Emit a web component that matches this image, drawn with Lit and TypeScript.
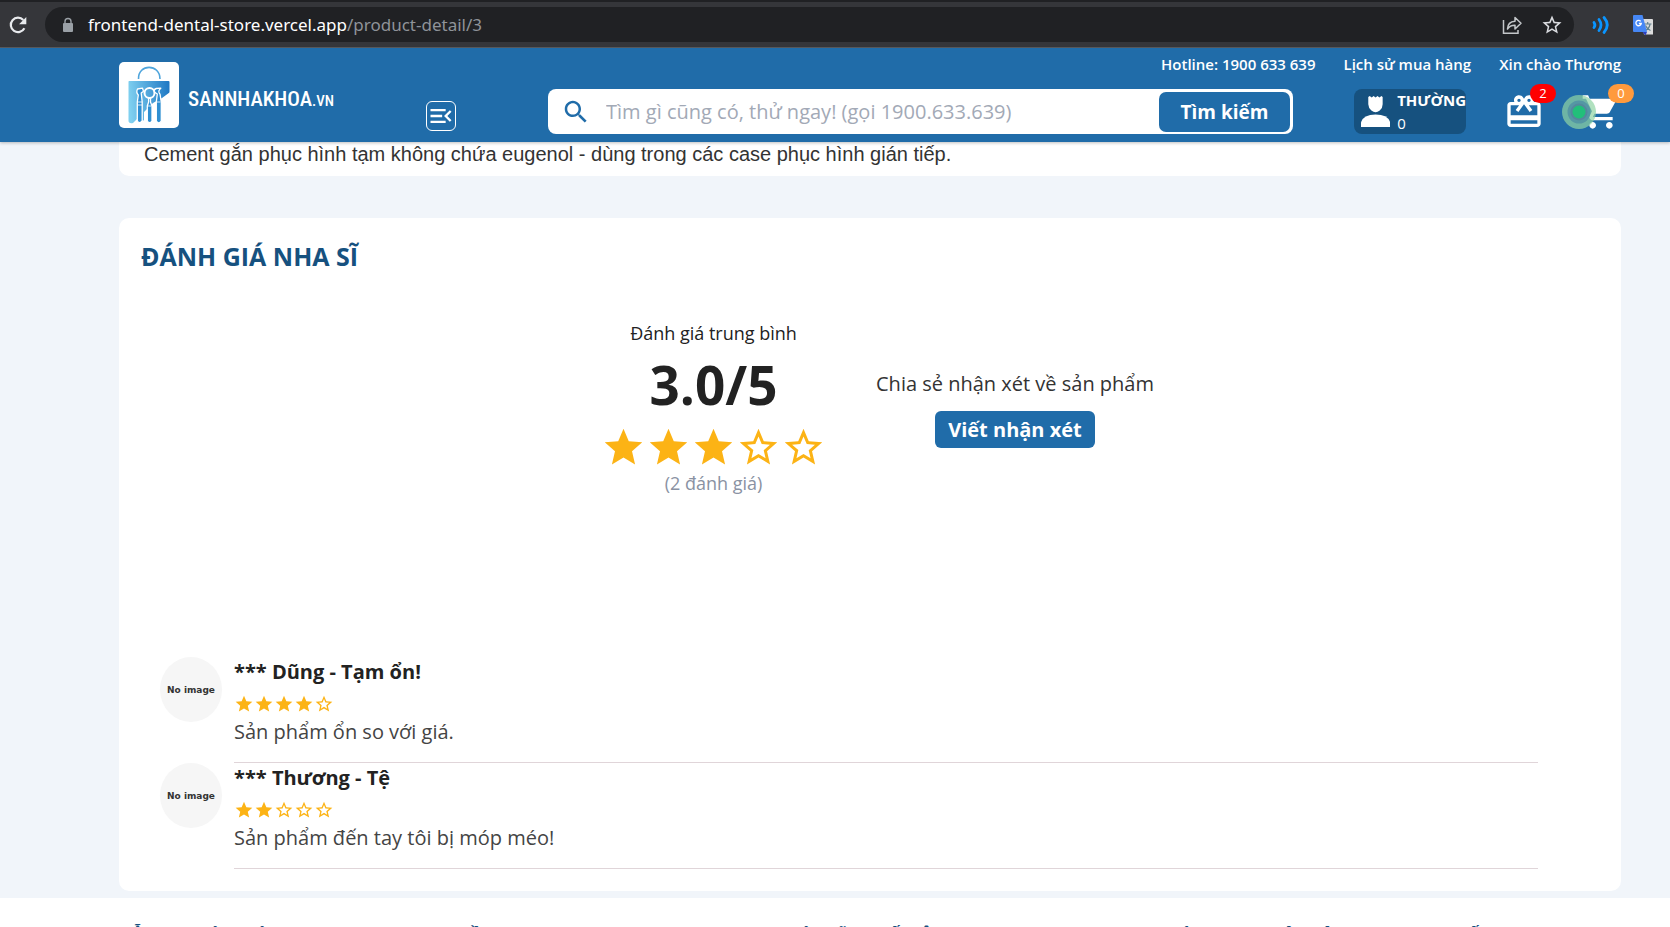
import { LitElement, html, svg, css } from "lit";
import { customElement, property } from "lit/decorators.js";

const STAR_FULL =
  "M12 17.27 18.18 21l-1.64-7.03L22 9.24l-7.19-.61L12 2 9.19 8.63 2 9.24l5.46 4.73L5.82 21z";
const STAR_EMPTY =
  "m22 9.24-7.19-.62L12 2 9.19 8.63 2 9.24l5.46 4.73L5.82 21 12 17.27 18.18 21l-1.63-7.03L22 9.24zM12 15.4l-3.76 2.27 1-4.28-3.32-2.88 4.38-.38L12 6.1l1.71 4.04 4.38.38-3.32 2.88 1 4.28L12 15.4z";

@customElement("star-rating")
export class StarRating extends LitElement {
  @property({ type: Number }) value = 0;
  @property({ type: Boolean, reflect: true }) large = false;

  static styles = css`
    :host { display: flex; color: #fcb315; }
    .star { display: block; width: 20px; height: 20px; fill: currentColor; }
    :host([large]) .star { width: 45px; height: 45px; }
  `;

  render() {
    return [1, 2, 3, 4, 5].map(
      (n) => html`<svg class="star" viewBox="0 0 24 24" aria-hidden="true">
        ${svg`<path d=${n <= this.value ? STAR_FULL : STAR_EMPTY}></path>`}
      </svg>`
    );
  }
}

@customElement("browser-bar")
export class BrowserBar extends LitElement {
  static styles = css`
    :host {
      display: flex; align-items: center; box-sizing: border-box; height: 48px;
      padding: 0 16px 0 8px; background: #35363a;
      border-top: 2px solid #202124; border-bottom: 1px solid #5b5c60;
      font-family: "Noto Sans", "Open Sans", sans-serif;
    }
    button { display: flex; padding: 0; border: 0; background: none; }
    .pill {
      display: flex; align-items: center; flex: 1; height: 35px; box-sizing: border-box;
      margin: 0 17px; padding: 0 12px 0 15px; border-radius: 18px; background: #202124;
    }
    .url { flex: 1; margin-left: 12px; font-size: 17px; line-height: 24px; color: #8f9399; white-space: nowrap; }
    .host { color: #fff; }
    .tools { display: flex; gap: 19px; }
    .extensions { display: flex; gap: 19px; align-items: center; }
    svg { display: block; }
  `;

  render() {
    return html`
      <button aria-label="Tải lại">
        <svg width="20" height="20" viewBox="0 0 20 20" fill="none">
          <path d="M16.4 13.2A7.2 7.2 0 1 1 15.3 5" stroke="#e8eaed" stroke-width="2.2" />
          <path d="M18.3 2v7.2h-7.2z" fill="#e8eaed" />
        </svg>
      </button>
      <div class="pill">
        <svg width="16" height="16" viewBox="0 0 16 16">
          <rect x="3" y="6" width="10" height="9" rx="1" fill="#9aa0a6" />
          <path d="M5 6.5V4.500a3 3 0 0 1 6 0V6.500" fill="none" stroke="#9aa0a6" stroke-width="1.400" />
        </svg>
        <span class="url"><span class="host">frontend-dental-store.vercel.app</span>/product-detail/3</span>
        <span class="tools">
          <button aria-label="Chia sẻ trang">
            <svg width="21" height="20" viewBox="0 0 21 20" fill="none" stroke="#c4c7ca" stroke-width="1.500">
              <path d="M1.500 5v13.200h14.500V15" />
              <path d="M5.500 14c.2-5 3.200-7.500 7.500-7.700V2.500l6 5.800-6 5.700v-3.800c-3.300 0-5.700 1-7.500 3.800z" stroke-linejoin="round" />
            </svg>
          </button>
          <button aria-label="Đánh dấu trang">
            <svg width="20" height="20" viewBox="1.500 1.500 21 21" fill="#dadce0"><path d=${STAR_EMPTY} /></svg>
          </button>
        </span>
      </div>
      <div class="extensions">
        <svg width="22" height="20" viewBox="0 0 22 20" fill="none" stroke="#0a95ff" stroke-width="2.800" stroke-linecap="round">
          <path d="M3 7.500q1.800 2.500 0 5M8 4.500q4 5.500 0 11M13 2.500q6.500 7.500 0 15" />
        </svg>
        <svg width="22" height="22" viewBox="0 0 22 22">
          <path d="M9 5h11a1 1 0 0 1 1 1v14.500H12z" fill="#dcdcdc" />
          <path d="M12 10h7.500M15.700 8v2M18 10.500c-.7 3-2.500 5-5 6M13.500 11.500c1 2.500 2.700 4 5 5" stroke="#5f7f8c" stroke-width="1.200" fill="none" />
          <path d="M1.500 1h9l4.500 17H2a1 1 0 0 1-1-1V2z" fill="#4687f4" />
          <path d="m10.500 18 3 3.500L15 18z" fill="#2c3fc0" />
          <path d="M8.700 7.300a2.700 2.700 0 1 0 .6 2.200H6.900" stroke="#fff" stroke-width="1.300" fill="none" />
        </svg>
      </div>
    `;
  }
}

@customElement("store-header")
export class StoreHeader extends LitElement {
  static styles = css`
    :host {
      display: grid; grid-template-columns: 307px 1fr auto; grid-template-rows: 41px 53px;
      padding: 0 49px 0 119px; background: #206ca9; color: #fff;
      box-shadow: 0 1px 3px rgba(0, 0, 0, 0.25); position: relative; z-index: 1;
    }
    a { color: inherit; text-decoration: none; }
    svg { display: block; }
    button { font-family: inherit; padding: 0; cursor: pointer; }
    .brand {
      display: flex; align-items: center; align-self: start; grid-row: 1 / 3;
      gap: 9px; height: 66px; margin-top: 14px;
    }
    .mark { width: 60px; height: 66px; border-radius: 5px; background: #fff; }
    .word {
      font: 500 21px/24px "Liberation Sans Narrow", "Roboto Condensed", Roboto, sans-serif;
      margin-top: 10px; white-space: nowrap;
    }
    .tld { font-size: 15px; }
    .middle { grid-column: 2; grid-row: 2; display: flex; align-items: center; align-self: start; gap: 92px; margin-right: 61px; }
    .menu {
      display: grid; place-items: center; width: 30px; height: 30px; align-self: flex-end; margin-bottom: 3px;
      border: 1px solid #fff; border-radius: 6px; background: none;
    }
    .search {
      display: flex; align-items: center; flex: 1; box-sizing: border-box; height: 45px;
      padding: 3px 3px 3px 13px; border-radius: 8px; background: #fff;
    }
    .search input {
      flex: 1; min-width: 0; margin-left: 15px; padding: 0; border: 0; outline: 0; background: none;
      font: 400 20px/27px "Open Sans", sans-serif; color: #222;
    }
    .search input::placeholder { color: #a2a9b6; opacity: 1; }
    .submit {
      width: 131px; height: 40px; border: 0; border-radius: 7px; background: #206ca9; color: #fff;
      font-weight: 700; font-size: 19px; line-height: 28px;
    }
    .links {
      grid-column: 2 / 4; grid-row: 1; display: flex; justify-content: flex-end; gap: 28px;
      padding-top: 6px; font-size: 15px; font-weight: 600; line-height: 20px; white-space: nowrap;
    }
    .actions { grid-column: 3; grid-row: 2; align-self: start; display: flex; align-items: center; height: 45px; }
    .account {
      display: flex; align-items: center; box-sizing: border-box; width: 112px; height: 45px;
      margin-right: 38px; padding-left: 7px; gap: 7px; border-radius: 8px; background: #16517f;
      font-size: 15px; line-height: 23px; white-space: nowrap;
    }
    .account b { display: block; }
    .icon { position: relative; display: block; width: 40px; height: 40px; }
    .icon svg { fill: #fff; }
    .cart { margin: 0 0 0 37px; }
    .badge {
      position: absolute; top: -8px; right: -12px; width: 26px; height: 19px; border-radius: 10px;
      background: #f00; font-size: 13px; line-height: 18px; text-align: center;
    }
    .cart .badge { right: -13px; background: #ff9a3d; }
    .pointer { position: absolute; left: -19px; top: 3px; }
    .icon .halo { fill: #90d4a4; opacity: 0.7; }
    .icon .ring { fill: #5597a4; }
    .icon .inner { fill: #55889c; }
    .icon .core { fill: #22bf7a; }
  `;

  render() {
    return html`
      <a class="brand" href="#" aria-label="Trang chủ">
        <svg class="mark" viewBox="0 0 60 66">
          <defs>
            <linearGradient id="bag" x1="0" x2="1" y1="0.3" y2="0.2">
              <stop offset="0" stop-color="#7fd0f0" /><stop offset="1" stop-color="#1f78c4" />
            </linearGradient>
          </defs>
          <path d="M19.500 17C19 1.500 41 1.500 41 17" fill="none" stroke="#4fa5dc" stroke-width="1.600" />
          <path d="M10 19h39.500q1 0 1 1v9.500q0 1-.7 1.500L43 36l-9 5-9 9v8.500l-7-1.500-4 4q-4.500 1-4.500-2.500V20q0-1 .5-1z" fill="url(#bag)" />
          <g fill="#2f8fd2" stroke="#fff" stroke-width="1.300" stroke-linejoin="round">
            <path d="M18.300 59V40l1-7q-2.500-2.500-.8-6l5-.8 1 3-2.300 1.800 1 9v19q-2.500 3.500-4.900 0z" />
            <path d="M28.300 59V44l1.300-4v-4h1.900v4l1.500 4v15q-2.400 3.500-4.700 0z" />
            <path d="M37.300 59V40l1-8-3-2q-.5-3 2-3.500l4.500-.3q-3.500 3-.8 6l1.300 8v19q-2.500 3.500-5 0z" />
            <circle cx="30.500" cy="31" r="5" fill="none" stroke-width="2" />
          </g>
          <path d="M19 40h4M28.500 44h4M37.500 40h4M19 43h4" stroke="#fff" stroke-width=".8" />
        </svg>
        <span class="word">SANNHAKHOA<span class="tld">.VN</span></span>
      </a>
      <nav class="links">
        <a href="#">Hotline: 1900 633 639</a>
        <a href="#">Lịch sử mua hàng</a>
        <a href="#">Xin chào Thương</a>
      </nav>
      <div class="middle">
        <button class="menu" aria-label="Danh mục">
          <svg width="28" height="28" viewBox="0 0 24 24" fill="#fff">
            <path d="M3 18h13v-2H3v2zm0-5h10v-2H3v2zm0-7v2h13V6H3zm18 9.590L17.420 12 21 8.410 19.590 7l-5 5 5 5L21 15.590z" />
          </svg>
        </button>
        <form class="search" @submit=${(e: Event) => e.preventDefault()}>
          <label for="query" aria-label="Tìm kiếm sản phẩm">
            <svg width="30" height="30" viewBox="0 0 24 24" fill="#206ca9">
              <path d="M15.500 14h-.79l-.28-.27C15.410 12.590 16 11.110 16 9.500 16 5.910 13.090 3 9.500 3S3 5.910 3 9.500 5.910 16 9.500 16c1.610 0 3.090-.59 4.230-1.570l.27.28v.79l5 4.990L20.490 19l-4.990-5zm-6 0C7.010 14 5 11.990 5 9.500S7.010 5 9.500 5 14 7.010 14 9.500 11.990 14 9.500 14z" />
            </svg>
          </label>
          <input id="query" type="text" placeholder="Tìm gì cũng có, thử ngay! (gọi 1900.633.639)" />
          <button class="submit" type="submit">Tìm kiếm</button>
        </form>
      </div>
      <div class="actions">
        <a class="account" href="#">
          <svg width="30" height="33" viewBox="0 0 30 33" fill="#fff">
            <path d="M7.500 1.500 9 .5l2 1.500L13 .5l2 1.500L17 .5l2 1.500L21 .5l1.300 1V9q0 4-3 6.500-4.300 3.500-8.600 0-3-2.500-3.200-6.500z" />
            <path d="M0 32.500v-5Q2.500 19.500 15 19.500t15 8v5z" />
          </svg>
          <span><b>THƯỜNG</b>0</span>
        </a>
        <a class="icon" href="#" aria-label="Quà tặng">
          <svg width="40" height="40" viewBox="0 0 24 24">
            <path d="M20 6h-2.180c.11-.31.18-.65.18-1 0-1.660-1.340-3-3-3-1.050 0-1.960.54-2.500 1.350l-.5.670-.5-.68C10.960 2.540 10.050 2 9 2 7.340 2 6 3.340 6 5c0 .35.07.69.18 1H4c-1.110 0-1.990.89-1.990 2L2 19c0 1.110.89 2 2 2h16c1.110 0 2-.89 2-2V8c0-1.110-.89-2-2-2zm-5-2c.55 0 1 .45 1 1s-.45 1-1 1-1-.45-1-1 .45-1 1-1zM9 4c.55 0 1 .45 1 1s-.45 1-1 1-1-.45-1-1 .45-1 1-1zm11 15H4v-2h16v2zm0-5H4V8h5.080L7 10.830 8.620 12 11 8.760l1-1.360 1 1.360L15.380 12 17 10.830 14.920 8H20v6z" />
          </svg>
          <span class="badge">2</span>
        </a>
        <a class="icon cart" href="#" aria-label="Giỏ hàng">
          <svg width="40" height="40" viewBox="0 0 24 24">
            <path d="M7 18c-1.100 0-1.990.9-1.990 2S5.900 22 7 22s2-.9 2-2-.9-2-2-2zM1 2v2h2l3.600 7.590-1.350 2.450c-.16.28-.25.61-.25.96 0 1.100.9 2 2 2h12v-2H7.420c-.14 0-.25-.11-.25-.25l.03-.12.9-1.630h7.450c.75 0 1.410-.41 1.750-1.030l3.580-6.490c.08-.14.12-.31.12-.48 0-.55-.45-1-1-1H5.210l-.94-2H1zm16 16c-1.100 0-1.990.9-1.990 2s.89 2 1.990 2 2-.9 2-2-.9-2-2-2z" />
          </svg>
          <svg class="pointer" width="34" height="34" viewBox="0 0 34 34">
            <circle class="halo" cx="17" cy="17" r="17" />
            <circle class="ring" cx="17" cy="17" r="11.500" />
            <circle class="inner" cx="17" cy="17" r="8.500" />
            <circle class="core" cx="17" cy="17" r="6.500" />
          </svg>
          <span class="badge">0</span>
        </a>
      </div>
    `;
  }
}

interface Review { title: string; stars: number; text: string; }

const REVIEWS: Review[] = [
  { title: "*** Dũng - Tạm ổn!", stars: 4, text: "Sản phẩm ổn so với giá." },
  { title: "*** Thương - Tệ", stars: 2, text: "Sản phẩm đến tay tôi bị móp méo!" },
];

@customElement("app-root")
export class AppRoot extends LitElement {
  static styles = css`
    :host {
      display: flex; flex-direction: column; height: 100vh; overflow: hidden;
      background: #f1f5fa; color: #222; font-family: "Open Sans", sans-serif;
    }
    browser-bar, store-header, main, footer { flex: none; }
    main { padding: 0 49px 7px 119px; }
    .card { background: #fff; border-radius: 10px; }
    .about {
      border-radius: 0 0 10px 10px; padding: 0 25px 10px; margin-bottom: 42px;
      font: 400 20px/24px "Liberation Sans", sans-serif; color: #333;
    }
    .about p { margin: 0; }
    .reviews { padding: 20px 22px 22px; }
    h2 { margin: 0; font-size: 25px; line-height: 36px; font-weight: 700; color: #16517f; }
    .summary { display: flex; justify-content: center; align-items: center; gap: 50px; height: 210px; margin-top: 29px; padding-left: 15px; }
    .average { display: flex; flex-direction: column; align-items: center; }
    .label { font-size: 18px; line-height: 24px; }
    .score { font-size: 53px; font-weight: 700; line-height: 80px; }
    .count { font-size: 18px; line-height: 26px; color: #8a92a3; }
    .share { display: flex; flex-direction: column; align-items: center; gap: 13px; padding-top: 2px; font-size: 20px; line-height: 28px; color: #333; }
    .write {
      height: 37px; padding: 0 13px; border: 0; border-radius: 6px; background: #206ca9; color: #fff;
      font: 700 20px/27px "Open Sans", sans-serif;
    }
    .list { margin: 0; padding: 144px 61px 0 19px; list-style: none; }
    .review { display: flex; gap: 12px; }
    .avatar {
      display: grid; place-items: center; flex: none; width: 62px; height: 65px; border-radius: 50%;
      background: #f6f6f6; font: 700 9px/12px "DejaVu Sans", sans-serif; color: #333;
    }
    .body { flex: 1; height: 106px; box-sizing: border-box; padding-top: 1px; border-bottom: 1px solid #e0d5d9; }
    h3 { margin: 0; font-size: 20px; line-height: 28px; font-weight: 700; }
    .body star-rating { margin: 8px 0 4px; }
    .body p { margin: 0; font-size: 20px; line-height: 28px; color: #444; }
    footer {
      display: grid; grid-template-columns: 342fr 328fr 339fr 493fr;
      padding: 26px 49px 20px 119px; background: #fff; color: #16517f;
    }
    h4 { margin: 0; font-size: 16px; line-height: 22px; font-weight: 700; white-space: nowrap; }
  `;

  render() {
    return html`
      <browser-bar></browser-bar>
      <store-header></store-header>
      <main>
        <section class="card about">
          <p>Cement gắn phục hình tạm không chứa eugenol - dùng trong các case phục hình gián tiếp.</p>
        </section>
        <section class="card reviews">
          <h2>ĐÁNH GIÁ NHA SĨ</h2>
          <div class="summary">
            <div class="average">
              <span class="label">Đánh giá trung bình</span>
              <span class="score">3.0/5</span>
              <star-rating large .value=${3}></star-rating>
              <span class="count">(2 đánh giá)</span>
            </div>
            <div class="share">
              <span>Chia sẻ nhận xét về sản phẩm</span>
              <button class="write">Viết nhận xét</button>
            </div>
          </div>
          <ul class="list">
            ${REVIEWS.map(
              (r) => html`<li class="review">
                <span class="avatar">No image</span>
                <div class="body">
                  <h3>${r.title}</h3>
                  <star-rating .value=${r.stars}></star-rating>
                  <p>${r.text}</p>
                </div>
              </li>`
            )}
          </ul>
        </section>
      </main>
      <footer>
        <h4>HỖ TRỢ KHÁCH HÀNG</h4>
        <h4>VỀ SANNHAKHOA</h4>
        <h4>CÁC HÃNG ĐỐI TÔN</h4>
        <h4>MUA HÀNG THEO LIÊN HỆ SANNHAKHOA ĐỐI</h4>
      </footer>
    `;
  }
}
